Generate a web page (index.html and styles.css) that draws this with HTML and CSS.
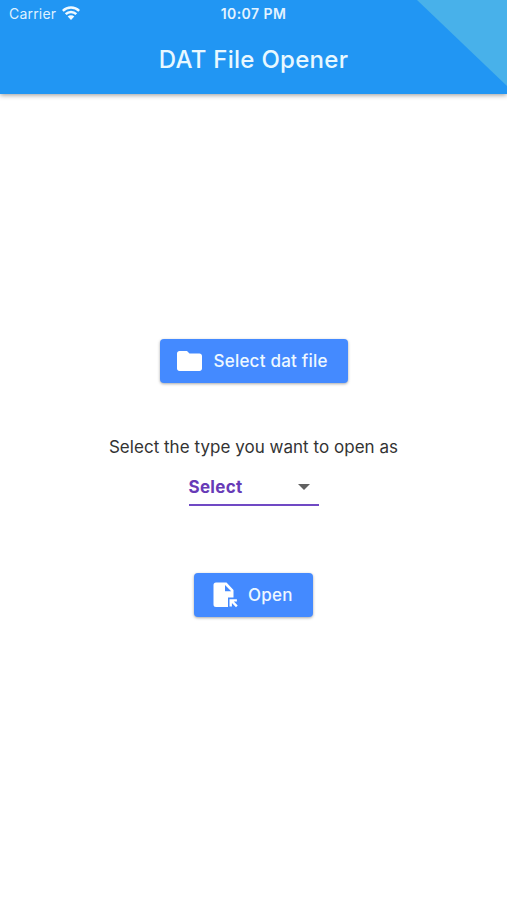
FILE: index.html
```html
<!DOCTYPE html>
<html lang="en">
<head>
    <meta charset="UTF-8">
    <title>DAT File Opener</title>
    <link rel="stylesheet" href="styles.css">
</head>
<body>

<header class="app-bar">
    <div class="status-bar">
        <div class="carrier">
            <span>Carrier</span>
            <svg class="wifi" viewBox="0 0 18 14">
                <path d="M.8 4.900a11.600 11.600 0 0 1 16.400 0M3.700 8.100a7.500 7.500 0 0 1 10.600 0" fill="none" stroke="#f0faff" stroke-width="2.500"/>
                <path d="M5.700 10.600a4.700 4.700 0 0 1 6.600 0L9 13.900z" fill="#f0faff"/>
            </svg>
        </div>
        <span class="time">10:07 PM</span>
    </div>
    <h1 class="title">DAT File Opener</h1>
    <div class="corner"></div>
</header>

<main class="content">
    <button class="btn select-btn">
        <svg class="folder-icon" viewBox="2 4 20 16" preserveAspectRatio="none">
            <path d="M10 4H4c-1.1 0-2 .9-2 2v12c0 1.1.9 2 2 2h16c1.1 0 2-.9 2-2V8c0-1.1-.9-2-2-2h-8z" fill="#fff"/>
        </svg>
        <span>Select dat file</span>
    </button>

    <p class="hint">Select the type you want to open as</p>

    <div class="dropdown">
        <span>Select</span>
        <svg class="arrow" viewBox="0 0 12 6"><path d="M0 0h12L6 6z" fill="#616161"/></svg>
    </div>

    <button class="btn open-btn">
        <svg class="file-icon" viewBox="0 0 25 26">
            <path d="M3 .5h10.500L20.500 8v7.500H15V25H3A2.500 2.500 0 0 1 .5 22.500V3A2.500 2.500 0 0 1 3 .5zM12 3v6.300h6.200z" fill="#fff" fill-rule="evenodd"/>
            <path d="M16.500 17.300h7.400v2.300h-3.100l3.900 3.900-1.700 1.700-4.100-4.100v3.400h-2.400z" fill="#fff"/>
        </svg>
        <span>Open</span>
    </button>
</main>

</body>
</html>
```

FILE: styles.css
```css
body {
    margin: 0;
    height: 900px;
    overflow: hidden;
    background-color: #fff;
    font-family: Inter, "Liberation Sans", sans-serif;
}
.app-bar {
    position: relative;
    height: 93.5px;
    background-color: #2196f3;
    color: #fff;
    box-shadow: 0 1px 5px rgba(0, 0, 0, 0.42);
}
.status-bar {
    display: grid;
    grid-template-columns: 1fr auto 1fr;
    align-items: center;
    height: 27px;
    padding: 0 9px;
    font-size: 14px;
}
.carrier {
    display: flex;
    align-items: center;
    gap: 6px;
    color: #dff1ff;
    letter-spacing: 0.2px;
}
.wifi {
    width: 18px;
    height: 14px;
    margin-top: -2px;
}
.time {
    font-weight: 600;
    font-size: 14px;
    letter-spacing: 0.45px;
    color: #e3f3ff;
}
.title {
    margin: 0;
    line-height: 66px;
    text-align: center;
    font-size: 24px;
    font-weight: 500;
    letter-spacing: 0.27px;
    color: #e8f8ff;
}
/* debug ribbon */
.corner {
    position: absolute;
    top: 0;
    right: 0;
    width: 90px;
    height: 86px;
    background-color: #48b1ea;
    clip-path: polygon(0 0, 100% 0, 100% 100%);
}
.content {
    display: flex;
    flex-direction: column;
    align-items: center;
    padding-top: 245.5px;
}
.btn {
    display: flex;
    align-items: center;
    height: 44px;
    border: none;
    border-radius: 4px;
    background-color: #448aff;
    color: #eef8ff;
    font-family: inherit;
    font-size: 17px;
    font-weight: 500;
    letter-spacing: 0.22px;
    box-shadow: 0 1px 3px rgba(0, 0, 0, 0.35);
    cursor: pointer;
}
.select-btn {
    width: 188px;
    padding: 0 0 1px 17px;
    gap: 12px;
}
.folder-icon {
    width: 25px;
    height: 20px;
}
.hint {
    margin: 53px 0 0;
    line-height: 22px;
    font-size: 17px;
    letter-spacing: 0.03px;
    color: #333;
}
.dropdown {
    display: flex;
    align-items: center;
    justify-content: space-between;
    box-sizing: border-box;
    width: 130px;
    height: 38px;
    margin-top: 10px;
    padding: 2px 9px 0 0;
    border-bottom: 2px solid #7049c4;
    color: #673ab7;
    font-size: 17px;
    font-weight: 700;
    letter-spacing: 0.3px;
}
.arrow {
    width: 12px;
    height: 6px;
}
.open-btn {
    width: 119px;
    margin-top: 67px;
    padding: 0 0 0 19px;
    gap: 10px;
}
.file-icon {
    width: 25px;
    height: 26px;
}
```
